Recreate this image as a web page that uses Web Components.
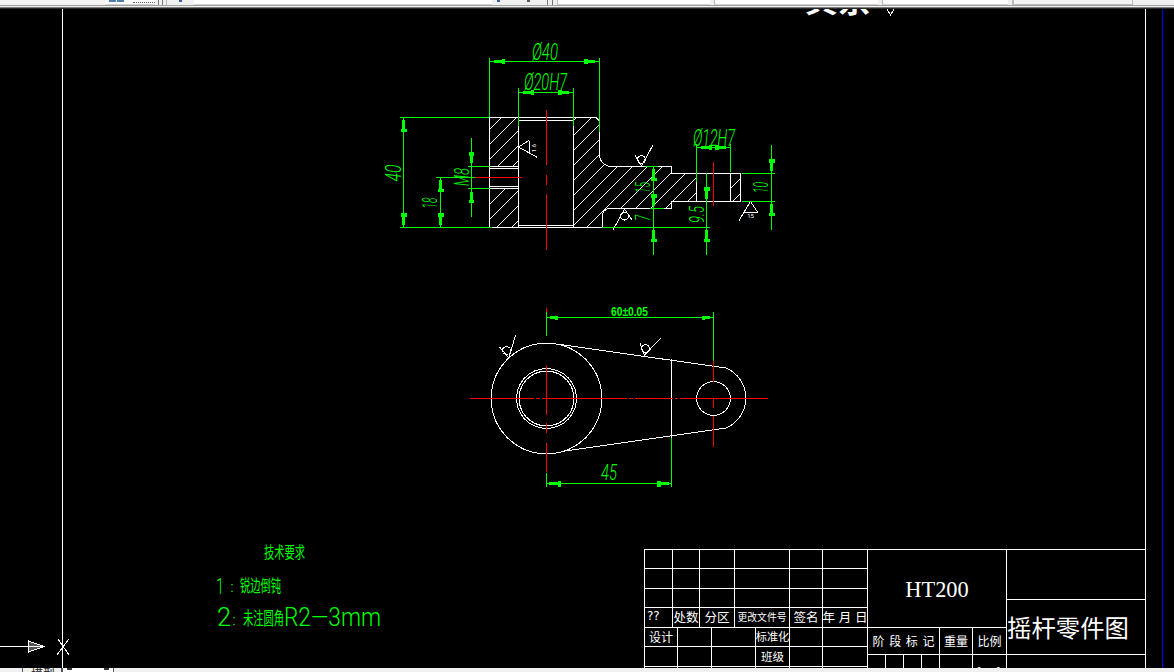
<!DOCTYPE html>
<html lang="zh">
<head>
<meta charset="utf-8">
<title>摇杆零件图</title>
<style>
  html, body { margin: 0; height: 100%; background: #000; overflow: hidden; }
</style>
</head>
<body>
<cad-app>
  <cad-toolbar slot="top"></cad-toolbar>
  <cad-sheet>
    <cad-frame></cad-frame>
    <cad-section></cad-section>
    <cad-plan></cad-plan>
    <cad-notes></cad-notes>
    <cad-title-block></cad-title-block>
  </cad-sheet>
  <cad-tabs slot="bottom"></cad-tabs>
</cad-app>

<script>
// helpers for the drawing, everything is in page pixels
const svgStyle = `
  svg { display: block; overflow: hidden; shape-rendering: crispEdges; }
  .w { stroke: #fff; fill: none; stroke-width: 1; }
  .g { stroke: #0f0; fill: none; stroke-width: 1; }
  .r { stroke: #f00; fill: none; stroke-width: 1; }
  .a { fill: #0f0; stroke: none; }
  .h { stroke: #fff; stroke-width: 1; }
  text { font-family: Roboto, 'Liberation Sans', sans-serif; }
  .t { fill: #0f0; font-style: italic; font-weight: 300; }
`
const sheet = (x, y, w, h, body) =>
  `<svg width="${w}" height="${h}" viewBox="${x} ${y} ${w} ${h}">${body}</svg>`
const line = (c, x1, y1, x2, y2) => `<line class="${c}" x1="${x1}" y1="${y1}" x2="${x2}" y2="${y2}"/>`
const poly = (c, pts) => `<polyline class="${c}" points="${pts}"/>`

// horizontal squeeze that brings a text to the width it has in the drawing
const ruler = document.createElement('canvas').getContext('2d')
function squeeze(txt, font, len) {
  ruler.font = font
  return (len / ruler.measureText(txt).width).toFixed(3)
}

// cad circles come out as polygons at this zoom
function ngon(cx, cy, r, n) {
  const pts = []
  for (let i = 0; i < n; i++) {
    const a = (i + .5) * 2 * Math.PI / n
    pts.push(`${(cx + r * Math.cos(a)).toFixed(1)},${(cy + r * Math.sin(a)).toFixed(1)}`)
  }
  return `<polygon class="w" points="${pts.join(' ')}"/>`
}

// closed dimension arrow. tip at x,y, the fat end is len away along dx,dy
function arrow(x, y, dx, dy, len = 13, w = 3) {
  const px = -dy, py = dx
  const at = (l, s) => `${x + dx * l + px * s},${y + dy * l + py * s}`
  return `<polygon class="a" points="${at(0, 0.4)} ${at(len * .3, w * .5)} ${at(len * .75, w * .6)} ${at(len * .75, w)} ${at(len, w)} ${at(len, -w)} ${at(len * .75, -w)} ${at(len * .75, -w * .6)} ${at(len * .3, -w * .5)} ${at(0, -0.4)}"/>`
}
// dimension text, centred on cx,cy
function dim(txt, cx, cy, size, len, rot = 0) {
  const sx = squeeze(txt, `italic 300 ${size}px Roboto`, len)
  return `<text class="t" font-size="${size}" text-anchor="middle" dominant-baseline="central"
    transform="translate(${cx} ${cy}) rotate(${rot}) scale(${sx} 1)">${txt}</text>`
}
// roughness mark: a V with a ring sitting in it
function rough(bx, by, lx, ly, sx, sy, cx, cy) {
  return poly('w', `${sx},${sy} ${bx},${by} ${lx},${ly}`) +
    `<circle class="w" cx="${cx}" cy="${cy}" r="4"/>`
}

class CadApp extends HTMLElement {
  constructor() {
    super()
    this.shadow = this.attachShadow({ mode: 'open' })
  }
  connectedCallback() {
    this.shadow.innerHTML = `
      <style>
        :host { display: flex; flex-direction: column; height: 100vh; background: #000; }
        .mid { flex: 1; min-height: 0; display: flex; }
      </style>
      <slot name="top"></slot>
      <div class="mid"><slot></slot></div>
      <slot name="bottom"></slot>
    `
  }
}

class CadToolbar extends HTMLElement {
  constructor() {
    super()
    this.shadow = this.attachShadow({ mode: 'open' })
  }
  connectedCallback() {
    this.shadow.innerHTML = `
      <style>
        :host { display: block; height: 9px; background: #f0f0f0; overflow: hidden; }
        .row { display: flex; height: 5px; background: #f0f0f0; }
        .row > div { height: 100%; box-sizing: border-box; flex: none; }
        .lite { background: #f4f4f4; }
        .box { background: #fff; border-bottom: 1px solid #d0d0d0; }
        .grip { display: flex; justify-content: space-around; padding: 0 2px; border-right: 1px solid #bbb; }
        .grip i { width: 1px; background: #777; }
        .blue { display: flex; gap: 1px; padding-left: 4px; align-items: flex-start; }
        .blue i { width: 7px; height: 2px; background: #4d7fb3; }
        .dash { width: 22px; height: 2px; margin-left: 8px; border-bottom: 1px dotted #666; }
        .dot { display: flex; justify-content: center; }
        .dot i { width: 3px; height: 2px; background: #3a5f9a; }
        .band { height: 1px; background: #a0a0a0; }
        .gap { height: 1px; background: #f0f0f0; }
        .dark { height: 1px; background: #7a7a7a; }
        .edge { height: 1px; background: #2a2a2a; }
      </style>
      <div class="row">
        <div class="lite" style="width:105px"></div>
        <div class="box blue" style="width:50px"><i></i><i></i><div class="dash"></div></div>
        <div class="grip" style="width:12px"><i></i><i></i></div>
        <div class="dot" style="width:27px"><i></i></div>
        <div class="box" style="width:298px"></div>
        <div style="width:51px;display:flex;justify-content:space-between;padding:0 13px 0 5px"><i style="width:3px;height:2px;background:#3a5f9a"></i><i style="width:3px;height:2px;background:#555"></i></div>
        <div class="grip" style="width:15px"><i></i><i></i></div>
        <div class="box" style="width:152px"></div>
        <div class="grip" style="width:5px"><i></i></div>
        <div class="box" style="width:163px"></div>
        <div class="grip" style="width:5px"><i></i></div>
        <div class="box" style="width:125px"></div>
        <div class="grip" style="width:5px"><i></i></div>
        <div class="lite" style="width:120px;border:1px solid #bbb;border-top:0"></div>
      </div>
      <div class="band"></div>
      <div class="gap"></div>
      <div class="dark"></div>
      <div class="edge"></div>
    `
  }
}

class CadSheet extends HTMLElement {
  constructor() {
    super()
    this.shadow = this.attachShadow({ mode: 'open' })
  }
  connectedCallback() {
    this.shadow.innerHTML = `
      <style>
        :host { display: block; position: relative; flex: 1; background: #000; overflow: hidden; }
      </style>
      <slot></slot>
    `
  }
}

// sheet border, blue limit line, ucs arrow and the clipped note at the top
class CadFrame extends HTMLElement {
  constructor() {
    super()
    this.shadow = this.attachShadow({ mode: 'open' })
  }
  connectedCallback() {
    this.shadow.innerHTML = `
      <style>
        :host { position: absolute; left: 0; top: 0; }
        ${svgStyle}
        .big { fill: #fff; font-family: 'Noto Sans CJK SC', sans-serif; }
      </style>
      ${sheet(0, 9, 1174, 659, `
        ${line('w', 62.5, 9, 62.5, 668)}
        ${line('w', 1145.5, 9, 1145.5, 668)}
        <line x1="1162.5" y1="9" x2="1162.5" y2="668" stroke="#00f"/>
        ${line('w', 0, 646.5, 28, 646.5)}
        <polygon points="28.5,641 44,646.5 28.5,652" fill="#555" stroke="#fff"/>
        ${line('w', 28.5, 646.5, 44, 646.5)}
        ${line('w', 58, 639, 69, 655)}
        ${line('w', 69, 639, 57, 655)}
        <text class="big" x="805" y="12" font-size="33" font-weight="700">其余</text>
        ${poly('w', '887,9 890.5,15 894,9')}
      `)}
    `
  }
}

// front view in section
class CadSection extends HTMLElement {
  constructor() {
    super()
    this.shadow = this.attachShadow({ mode: 'open' })
  }
  connectedCallback() {
    let hatch = ''
    for (let c = 619; c < 960; c += 15) hatch += `<line class="h" x1="${c - 240}" y1="240" x2="${c - 100}" y2="100"/>`
    const outline = 'M573.5 117.5 H596 L599.5 121 V156 Q600 163 608 166 H671.5 V173.5 H696.5 V201.5 H671.5 V208.5 H610 Q602.5 209 602.5 216 V227.5 H573.5 Z'

    this.shadow.innerHTML = `
      <style>
        :host { position: absolute; left: 370px; top: 16px; }
        ${svgStyle}
        .tiny { fill: #fff; font-size: 6px; }
      </style>
      ${sheet(370, 25, 420, 235, `
        <defs><clipPath id="solid">
          <path d="${outline}"/>
          <rect x="489.5" y="117.5" width="29" height="48.5"/>
          <rect x="489.5" y="188.5" width="29" height="39"/>
          <rect x="730.5" y="173.5" width="10" height="28"/>
        </clipPath></defs>
        <g clip-path="url(#solid)">${hatch}</g>

        <!-- outline -->
        <path class="w" d="${outline}"/>
        <rect class="w" x="489.5" y="117.5" width="84" height="110"/>
        <rect class="w" x="518.5" y="120.5" width="55" height="105"/>
        ${line('w', 518.5, 117.5, 518.5, 227.5)}
        ${poly('w', '696.5,173.5 740.5,173.5 740.5,201.5 696.5,201.5 696.5,173.5')}
        ${line('w', 730.5, 173.5, 730.5, 201.5)}
        ${line('w', 490, 166.5, 518, 166.5)}
        ${line('w', 490, 168.5, 518, 168.5)}
        ${line('w', 490, 186.5, 518, 186.5)}
        ${line('w', 490, 188.5, 518, 188.5)}

        <!-- centre lines -->
        ${line('r', 546.5, 110, 546.5, 165)}
        ${line('r', 546.5, 175, 546.5, 185)}
        ${line('r', 546.5, 194, 546.5, 250)}
        ${line('r', 475, 177.5, 522, 177.5)}
        ${line('r', 713.5, 162, 713.5, 206)}

        <!-- dimensions -->
        ${line('g', 489.5, 58, 489.5, 117)}
        ${line('g', 599.5, 58, 599.5, 132)}
        ${line('g', 489.5, 61.5, 599.5, 61.5)}
        ${arrow(491, 61.5, 1, 0, 14, 2.6)}${arrow(598, 61.5, -1, 0, 14, 2.6)}
        ${dim('Ø40', 545, 52, 24, 26)}

        ${line('g', 518.5, 88, 518.5, 126)}
        ${line('g', 573.5, 88, 573.5, 126)}
        ${line('g', 518.5, 92.5, 573.5, 92.5)}
        ${arrow(520, 92.5, 1, 0, 14, 2.6)}${arrow(572, 92.5, -1, 0, 14, 2.6)}
        ${dim('Ø20H7', 545.5, 82.5, 24, 43)}

        ${line('g', 400, 117.5, 489, 117.5)}
        ${line('g', 400, 227.5, 492, 227.5)}
        ${line('g', 403.5, 118, 403.5, 227)}
        ${arrow(403.5, 118, 0, 1, 14)}${arrow(403.5, 227, 0, -1, 14)}
        ${dim('40', 394, 173, 22, 17, -90)}

        ${line('g', 436, 177.5, 475, 177.5)}
        ${line('g', 440.5, 178, 440.5, 227)}
        ${arrow(440.5, 178, 0, 1, 14)}${arrow(440.5, 227, 0, -1, 14)}
        ${dim('18', 430.5, 203, 20, 11, -90)}

        ${line('g', 468, 166.5, 490, 166.5)}
        ${line('g', 468, 188.5, 490, 188.5)}
        ${line('g', 471.5, 138, 471.5, 217)}
        ${arrow(471.5, 166, 0, -1, 14, 2.6)}${arrow(471.5, 189, 0, 1, 14, 2.6)}
        ${dim('M8', 462, 177, 21, 18, -90)}

        ${line('g', 696.5, 144, 696.5, 182)}
        ${line('g', 730.5, 144, 730.5, 172)}
        ${line('g', 696.5, 147.5, 730.5, 147.5)}
        ${arrow(698, 147.5, 1, 0, 14, 2.6)}${arrow(729, 147.5, -1, 0, 14, 2.6)}
        ${dim('Ø12H7', 714, 138, 24, 42)}

        ${line('g', 645, 166.5, 658, 166.5)}
        ${line('g', 650, 208.5, 664, 208.5)}
        ${line('g', 653.5, 166, 653.5, 255)}
        ${arrow(653.5, 167, 0, 1, 14)}${arrow(653.5, 208, 0, -1, 14)}
        ${arrow(653.5, 228, 0, 1, 14)}
        ${dim('15', 643, 187.5, 20, 11, -90)}
        ${dim('7', 643, 218, 20, 6, -90)}

        ${line('g', 602, 227.5, 710, 227.5)}
        ${line('g', 706.5, 173, 706.5, 255)}
        ${arrow(706.5, 201, 0, -1, 14)}${arrow(706.5, 228, 0, 1, 14)}
        ${dim('9.5', 696.5, 214.5, 20, 17, -90)}

        ${line('g', 742, 173.5, 775, 173.5)}
        ${line('g', 742, 201.5, 775, 201.5)}
        ${line('g', 771.5, 145, 771.5, 230)}
        ${arrow(771.5, 173, 0, -1, 14)}${arrow(771.5, 202, 0, 1, 14)}
        ${dim('10', 761, 187.5, 20, 11, -90)}

        <!-- roughness -->
        ${poly('w', '529,140.5 518.5,147 537.5,157.5')}
        ${line('w', 529, 140.5, 529, 152.5)}
        <text class="tiny" transform="translate(536 148) rotate(-90)" text-anchor="middle">1.6</text>
        ${rough(641.5, 166, 653, 145, 635, 155, 641.5, 159.5)}
        ${rough(624.5, 209, 613, 230, 632, 220, 624.5, 216)}
        ${poly('w', '750.5,201.5 744,212 757.5,212 750.5,201.5')}
        ${line('w', 744, 212, 739, 221)}
        <text class="tiny" x="750.5" y="218" text-anchor="middle">15</text>
      `)}
    `
  }
}

// top view
class CadPlan extends HTMLElement {
  constructor() {
    super()
    this.shadow = this.attachShadow({ mode: 'open' })
  }
  connectedCallback() {
    const tolFont = `700 13px 'Liberation Sans'`
    const tol = squeeze('60±0.05', tolFont, 37)
    this.shadow.innerHTML = `
      <style>
        :host { position: absolute; left: 460px; top: 286px; }
        ${svgStyle}
        .bold { font-family: 'Liberation Sans', sans-serif; font-weight: 700; font-style: normal; }
      </style>
      ${sheet(460, 295, 320, 200, `
        ${ngon(546.5, 398.5, 55.5, 36)}
        <path class="w" d="M560 344.5 L726 368 A32.6 32.6 0 0 1 726 428 L562 451.5"/>
        ${ngon(546.5, 398.5, 30, 30)}
        ${ngon(546.5, 398.5, 27.5, 30)}
        ${ngon(713.5, 398.5, 17, 20)}
        ${line('w', 671.5, 359, 671.5, 438)}

        ${line('r', 470, 398.5, 534, 398.5)}
        ${line('r', 536, 398.5, 540, 398.5)}
        ${line('r', 542, 398.5, 627, 398.5)}
        ${line('r', 629, 398.5, 633, 398.5)}
        ${line('r', 635, 398.5, 673, 398.5)}
        ${line('r', 675, 398.5, 678, 398.5)}
        ${line('r', 680, 398.5, 768, 398.5)}
        ${line('r', 546.5, 308, 546.5, 336)}
        ${line('r', 546.5, 365, 546.5, 415)}
        ${line('r', 546.5, 423, 546.5, 433)}
        ${line('r', 546.5, 443, 546.5, 472)}
        ${line('r', 713.5, 361, 713.5, 382)}
        ${line('r', 713.5, 398, 713.5, 408)}
        ${line('r', 713.5, 416, 713.5, 447)}

        ${line('g', 546.5, 312, 546.5, 336)}
        ${line('g', 713.5, 312, 713.5, 361)}
        ${line('g', 546.5, 317.5, 713.5, 317.5)}
        ${arrow(547, 317.5, 1, 0, 11, 2)}${arrow(713, 317.5, -1, 0, 11, 2)}
        <text class="t bold" font-size="13" transform="translate(611 316) scale(${tol} 1)">60±0.05</text>

        ${line('g', 546.5, 473, 546.5, 487)}
        ${line('g', 671.5, 438, 671.5, 487)}
        ${line('g', 546.5, 483.5, 671.5, 483.5)}
        ${arrow(547, 483.5, 1, 0, 14)}${arrow(671, 483.5, -1, 0, 14)}
        ${dim('45', 609, 473, 22, 16)}

        ${rough(509, 358, 515.5, 335, 499.5, 347, 506.5, 350.5)}
        ${rough(644.5, 355, 661, 338, 640, 343.5, 645.5, 348.5)}
      `)}
    `
  }
}

class CadNotes extends HTMLElement {
  constructor() {
    super()
    this.shadow = this.attachShadow({ mode: 'open' })
  }
  connectedCallback() {
    // narrow cjk: squeezed sideways to the width of the drawn text
    const cjk = (txt, x, y, size, len) => {
      const sx = (len / (txt.length * size)).toFixed(3)
      return `<text transform="translate(${x} ${y}) scale(${sx} 1)" font-size="${size}">${txt}</text>`
    }
    const lat = (txt, x, y, size, len) => {
      const sx = squeeze(txt, `300 ${size}px Roboto`, len)
      return `<text class="lat" transform="translate(${x} ${y}) scale(${sx} 1)" font-size="${size}">${txt}</text>`
    }
    this.shadow.innerHTML = `
      <style>
        :host { position: absolute; left: 210px; top: 531px; }
        ${svgStyle}
        text { fill: #0f0; font-family: 'Noto Sans CJK SC', sans-serif; }
        text.lat { font-family: Roboto, 'Liberation Sans', sans-serif; font-weight: 300; }
      </style>
      ${sheet(210, 540, 190, 100, `
        ${cjk('技术要求', 264, 558, 16, 41)}
        ${lat('1', 216, 594, 22, 8)}
        ${lat(':', 230, 592, 15, 4)}
        ${cjk('锐边倒钝', 240, 592, 17, 41)}
        ${lat('2', 217, 626, 26, 14)}
        ${lat(':', 232, 625, 15, 4)}
        ${cjk('未注圆角', 243, 625, 18, 41)}
        ${lat('R2—3mm', 284, 626, 25, 97)}
      `)}
    `
  }
}

// title block is a table, so plain grids of bordered cells
class CadTitleBlock extends HTMLElement {
  constructor() {
    super()
    this.shadow = this.attachShadow({ mode: 'open' })
  }
  connectedCallback() {
    const cells = (n, txt = '') => Array(n).fill(`<div>${txt}</div>`).join('')
    this.shadow.innerHTML = `
      <style>
        :host {
          position: absolute; left: 644px; top: 540px;
          display: grid; grid-template-columns: 223px 139px 139px;
          border-top: 1px solid #fff; border-left: 1px solid #fff;
          color: #fff; font: 12px 'Noto Sans CJK SC', sans-serif;
        }
        .col { display: flex; flex-direction: column; }
        .grid { display: grid; }
        .grid > div, .cell {
          box-sizing: border-box; border-right: 1px solid #fff; border-bottom: 1px solid #fff;
          display: flex; align-items: center; justify-content: center;
          white-space: nowrap; overflow: hidden; line-height: 1;
        }
        .changes { grid-template-columns: 28px 27px 35px 55px 33px 45px; grid-template-rows: 19px 20px 19px 20px; }
        .approve { grid-template-columns: 33px 34px 44px 34px 33px 45px; grid-template-rows: 19px 20px 20px; }
        .marks { grid-template-columns: 72px 33px 34px; grid-template-rows: 27px; }
        .stage { grid-template-columns: 18px 18px 18px 18px 33px 34px; grid-template-rows: 30px; }
        .q { font-family: 'DejaVu Sans', sans-serif; justify-content: flex-start !important; padding: 0 0 3px 2px; }
        .material { height: 78px; font: 22.4px 'Liberation Serif', serif; padding-top: 3px; }
        .name { height: 55px; font-size: 24.4px; justify-content: flex-start; }
        .blank { height: 50px; }
        .rest { height: 40px; }
        .ratio { align-items: flex-start !important; padding-top: 10px; letter-spacing: 1px; }
      </style>
      <div class="col">
        <div class="grid changes">
          ${cells(18)}
          <div class="q">??</div>
          <div style="font-size:12.5px">处数</div>
          <div style="font-size:12.5px">分区</div>
          <div style="font-size:9.8px">更改文件号</div>
          <div style="font-size:12.5px">签名</div>
          <div style="font-size:12.5px;word-spacing:1px">年 月 日</div>
        </div>
        <div class="grid approve">
          <div style="font-size:12px">设计</div>${cells(2)}
          <div style="font-size:11.2px">标准化</div>${cells(2)}
          ${cells(3)}<div style="font-size:11.5px">班级</div>${cells(2)}
          ${cells(6)}
        </div>
      </div>
      <div class="col">
        <div class="cell material">HT200</div>
        <div class="grid marks">
          <div style="word-spacing:2px">阶 段 标 记</div>
          <div>重量</div>
          <div>比例</div>
        </div>
        <div class="grid stage">
          ${cells(5)}
          <div class="ratio">1 : 1</div>
        </div>
      </div>
      <div class="col">
        <div class="cell blank"></div>
        <div class="cell name">摇杆零件图</div>
        <div class="cell rest"></div>
      </div>
    `
  }
}

class CadTabs extends HTMLElement {
  constructor() {
    super()
    this.shadow = this.attachShadow({ mode: 'open' })
  }
  connectedCallback() {
    this.shadow.innerHTML = `
      <style>
        :host { display: flex; height: 4px; background: #f0f0f0; overflow: hidden; font: 12px 'Noto Sans CJK SC', sans-serif; color: #222; }
        .tick { width: 1px; background: #555; flex: none; }
        .model { width: 38px; padding-left: 8px; box-sizing: border-box; line-height: 12px; flex: none; margin-top: 0; }
        .tab { width: 51px; background: #fff; border-right: 1px solid #555; display: flex; justify-content: space-between; padding: 0 4px; box-sizing: border-box; flex: none; }
        .tab i { width: 5px; height: 2px; background: #333; }
      </style>
      <div style="width:22px;flex:none"></div>
      <div class="tick"></div>
      <div class="model">模型</div>
      <div class="tick"></div>
      <div class="tick"></div>
      <div class="tab"><i></i><i></i></div>
    `
  }
}

customElements.define('cad-app', CadApp)
customElements.define('cad-toolbar', CadToolbar)
customElements.define('cad-sheet', CadSheet)
customElements.define('cad-frame', CadFrame)
customElements.define('cad-section', CadSection)
customElements.define('cad-plan', CadPlan)
customElements.define('cad-notes', CadNotes)
customElements.define('cad-title-block', CadTitleBlock)
customElements.define('cad-tabs', CadTabs)
</script>
</body>
</html>
